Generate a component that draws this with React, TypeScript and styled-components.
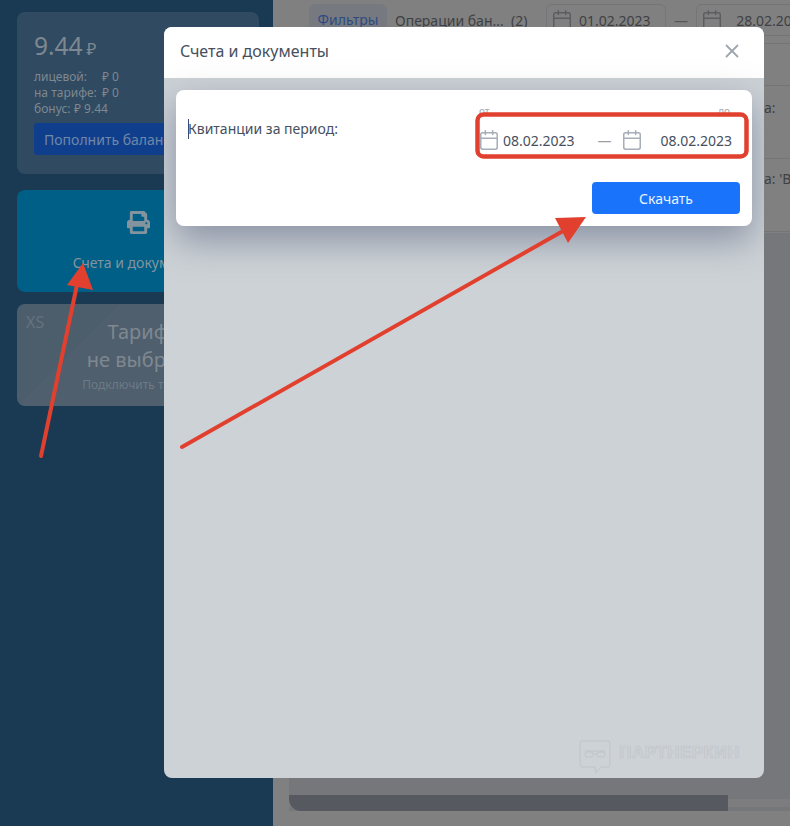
import React from "react";
import styled, { createGlobalStyle } from "styled-components";
import { Calendar, X } from "lucide-react";
import { FaPrint } from "react-icons/fa";

const GlobalStyle = createGlobalStyle`
  html, body {
    margin: 0;
    padding: 0;
    background: #808080;
    font-family: "Noto Sans", "Open Sans", sans-serif;
  }
`;

const Page = styled.div`
  position: relative;
  display: flex;
  width: 790px;
  height: 826px;
  overflow: hidden;
  background: #808080;
`;

const Sidebar = styled.aside`
  flex: 0 0 273px;
  min-width: 0;
  box-sizing: border-box;
  padding: 12px 14px 0 17px;
  display: flex;
  flex-direction: column;
  background: #1a3a54;
`;

const BalanceCard = styled.section`
  box-sizing: border-box;
  height: 162px;
  margin-bottom: 16px;
  padding: 16px 17px;
  border-radius: 8px;
  background: #2f4a61;
  color: #7e8890;
`;

const Amount = styled.div`
  font-size: 24.5px;
  line-height: 36px;
  margin-bottom: 2px;

  small {
    font-size: 17px;
    margin-left: 4px;
  }
`;

const BalanceLine = styled.div`
  display: flex;
  font-size: 12px;
  line-height: 16px;

  span:first-child {
    width: ${(p: { $label: number }) => p.$label}px;
  }
`;

const TopUp = styled.button`
  display: block;
  width: 208px;
  height: 32px;
  margin-top: 6px;
  padding: 0 10px;
  border: none;
  border-radius: 3px;
  background: #0f3f8c;
  color: #6f87a8;
  font: inherit;
  font-size: 14px;
  text-align: left;
  white-space: nowrap;
`;

const DocsCard = styled.section`
  box-sizing: border-box;
  height: 102px;
  margin-bottom: 12px;
  padding-top: 21px;
  display: flex;
  flex-direction: column;
  align-items: center;
  border-radius: 8px;
  background: #005f86;
  color: #84949f;
  font-size: 14px;

  svg {
    font-size: 23px;
    margin-bottom: 19px;
  }
`;

const TariffCard = styled.section`
  position: relative;
  box-sizing: border-box;
  height: 102px;
  padding-top: 14px;
  border-radius: 8px;
  background: linear-gradient(135deg, #4c5d6b 0 30%, #4f5f6d 30% 100%);
  color: #7f8890;
  text-align: center;
`;

const TariffTag = styled.span`
  position: absolute;
  top: 7px;
  left: 9px;
  font-size: 16px;
  color: #66737e;
`;

const TariffTitle = styled.div`
  font-size: 20px;
  line-height: 28px;
`;

const TariffLink = styled.div`
  margin-top: 3px;
  font-size: 12px;
  line-height: 16px;
  color: #6d7a85;
`;

const Main = styled.main`
  flex: 1;
  min-width: 0;
  display: flex;
  flex-direction: column;
  padding-left: 16px;
  color: #3f4043;
  font-size: 14px;
`;

const Toolbar = styled.div`
  display: flex;
  align-items: center;
  flex: 0 0 43px;
  box-sizing: border-box;
  padding: 4px 0 7px 20px;
  white-space: nowrap;
`;

const FilterChip = styled.div`
  box-sizing: border-box;
  flex: 0 0 78px;
  height: 32px;
  margin-right: 8px;
  padding-top: 6px;
  text-align: center;
  border-radius: 6px;
  background: #767a80;
  color: #2f4a80;
`;

const ToolbarLabel = styled.span`
  flex: 0 0 151px;
`;

const ToolbarDate = styled.div`
  box-sizing: border-box;
  flex: 0 0 120px;
  height: 32px;
  padding: 0 4px;
  display: flex;
  align-items: center;
  gap: 6px;
  border: 1px solid #747577;
  border-radius: 6px;

  svg {
    flex: none;
    color: #5c5d60;
  }
`;

const ToolbarDash = styled.span`
  flex: 0 0 30px;
  text-align: center;
  color: #55565a;
`;

const Table = styled.div`
  flex: 0 0 189px;
  border-top: 1px solid #757575;
`;

const TableRow = styled.div`
  box-sizing: border-box;
  height: ${(p: { $height: number; $top: number }) => p.$height}px;
  padding: ${(p: { $height: number; $top: number }) => p.$top}px 0 0 475px;
  border-bottom: 1px solid #757575;
  white-space: nowrap;
`;

const TableRest = styled.div`
  flex: 1;
  background: #76777a;
`;

const ScrollTrack = styled.div`
  flex: 0 0 16px;
  display: flex;
  background: linear-gradient(#76777a 0 4px, #7d7d7f 4px 12px, #76777a 12px);
`;

const ScrollThumb = styled.div`
  width: 439px;
  border-radius: 0 0 0 12px;
  background: #56595f;
`;

const ScrollEnd = styled.div`
  flex: 0 0 15px;
`;

const Modal = styled.div`
  position: absolute;
  top: 27px;
  left: 164px;
  width: 600px;
  height: 751px;
  display: flex;
  flex-direction: column;
  overflow: hidden;
  border-radius: 8px;
  background: #cdd2d6;
  color: #46505e;
`;

const ModalHeader = styled.header`
  flex: 0 0 51px;
  box-sizing: border-box;
  display: flex;
  align-items: center;
  justify-content: space-between;
  padding: 0 21px 4px 16px;
  background: #fff;
  font-size: 16px;

  svg {
    color: #9ea6af;
  }
`;

const ModalBody = styled.div`
  flex: 1;
  padding: 12px;
`;

const ReceiptCard = styled.div`
  box-sizing: border-box;
  height: 136px;
  padding: 0 12px;
  border-radius: 8px;
  background: #fff;
  box-shadow: 0 14px 36px rgba(82, 92, 122, 0.55);
`;

const ReceiptRow = styled.div`
  display: flex;
  justify-content: space-between;
  height: 92px;
`;

const PeriodLabel = styled.label`
  align-self: flex-start;
  margin-top: 29px;
  border-left: 1.5px solid #3a4a7a;
  text-indent: -1px;
  font-size: 14px;
  line-height: 20px;
`;

const PeriodGroup = styled.div`
  box-sizing: border-box;
  width: 263px;
  padding: 15px 8px 0 1px;
`;

const PeriodCaptions = styled.div`
  display: flex;
  justify-content: space-between;
  padding: 0 2px 0 1px;
  font-size: 10px;
  line-height: 12px;
  color: #a3a9b0;
`;

const PeriodDates = styled.div`
  display: flex;
  align-items: center;
  margin-top: 12px;
  font-size: 14px;
`;

const DateField = styled.div`
  flex: ${(p: { $wide?: boolean }) => (p.$wide ? "1" : "0 0 auto")};
  display: flex;
  align-items: center;
  justify-content: space-between;
  gap: 3px;

  svg {
    color: #a8aeb8;
  }
`;

const DateDash = styled.span`
  box-sizing: border-box;
  width: 46px;
  padding-left: 14px;
  text-align: center;
  color: #9aa0a8;
`;

const ReceiptFooter = styled.div`
  display: flex;
  justify-content: flex-end;
`;

const Download = styled.button`
  width: 148px;
  height: 32px;
  border: none;
  border-radius: 4px;
  background: #1a73fb;
  color: #e8f1ff;
  font: inherit;
  font-size: 14px;
`;

const Watermark = styled.div`
  position: absolute;
  right: 24px;
  bottom: 4px;
  display: flex;
  align-items: center;
  gap: 8px;

  svg {
    display: block;
  }
`;

const WatermarkText = styled.span`
  margin-bottom: 8px;
  color: transparent;
  -webkit-text-stroke: 0.7px #bfc4c9;
  font-family: "Liberation Sans", sans-serif;
  font-size: 17px;
  font-weight: 700;
  letter-spacing: 0.5px;
`;

const Annotations = styled.svg`
  position: absolute;
  top: 0;
  left: 0;
`;

const App = () => {
  return (
    <Page>
      <GlobalStyle />
      <Sidebar>
        <BalanceCard>
          <Amount>
            9.44<small>₽</small>
          </Amount>
          <BalanceLine $label={68}>
            <span>лицевой:</span>
            <span>₽ 0</span>
          </BalanceLine>
          <BalanceLine $label={68}>
            <span>на тарифе:</span>
            <span>₽ 0</span>
          </BalanceLine>
          <BalanceLine $label={40}>
            <span>бонус:</span>
            <span>₽ 9.44</span>
          </BalanceLine>
          <TopUp>Пополнить баланс</TopUp>
        </BalanceCard>
        <DocsCard>
          <FaPrint />
          Счета и документы
        </DocsCard>
        <TariffCard>
          <TariffTag>XS</TariffTag>
          <TariffTitle>Тариф</TariffTitle>
          <TariffTitle>не выбран</TariffTitle>
          <TariffLink>Подключить тариф</TariffLink>
        </TariffCard>
      </Sidebar>

      <Main>
        <Toolbar>
          <FilterChip>Фильтры</FilterChip>
          <ToolbarLabel>Операции бан...&nbsp; (2)</ToolbarLabel>
          <ToolbarDate>
            <Calendar size={22} strokeWidth={1.6} />
            01.02.2023
          </ToolbarDate>
          <ToolbarDash>—</ToolbarDash>
          <ToolbarDate>
            <Calendar size={22} strokeWidth={1.6} />
            &nbsp;&nbsp;28.02.2023
          </ToolbarDate>
        </Toolbar>
        <Table>
          <TableRow $height={42} $top={0} />
          <TableRow $height={73} $top={12}>
            а:
          </TableRow>
          <TableRow $height={73} $top={10}>
            а: 'В
          </TableRow>
        </Table>
        <TableRest />
        <ScrollTrack>
          <ScrollThumb />
        </ScrollTrack>
        <ScrollEnd />
      </Main>

      <Modal>
        <ModalHeader>
          Счета и документы
          <X size={22} strokeWidth={2} />
        </ModalHeader>
        <ModalBody>
          <ReceiptCard>
            <ReceiptRow>
              <PeriodLabel>Квитанции за период:</PeriodLabel>
              <PeriodGroup>
                <PeriodCaptions>
                  <span>от</span>
                  <span>до</span>
                </PeriodCaptions>
                <PeriodDates>
                  <DateField>
                    <Calendar size={22} strokeWidth={1.7} />
                    08.02.2023
                  </DateField>
                  <DateDash>—</DateDash>
                  <DateField $wide>
                    <Calendar size={22} strokeWidth={1.7} />
                    08.02.2023
                  </DateField>
                </PeriodDates>
              </PeriodGroup>
            </ReceiptRow>
            <ReceiptFooter>
              <Download>Скачать</Download>
            </ReceiptFooter>
          </ReceiptCard>
        </ModalBody>
        <Watermark>
          <svg width="32" height="34" viewBox="0 0 32 34" fill="none" stroke="#bfc4c9" strokeWidth="1">
            <path d="M3 1h26a2 2 0 0 1 2 2v22a2 2 0 0 1-2 2h-7l-5 6-1-6H3a2 2 0 0 1-2-2V3a2 2 0 0 1 2-2z" />
            <rect x="6" y="12" width="8" height="5" rx="2" />
            <rect x="18" y="12" width="8" height="5" rx="2" />
            <path d="M14 14h4M6 11h20" />
          </svg>
          <WatermarkText>ПАРТНЕРКИН</WatermarkText>
        </Watermark>
      </Modal>

      <Annotations width="790" height="826" viewBox="0 0 790 826" fill="none">
        <rect x="477.5" y="114.5" width="269" height="42" rx="6" stroke="#e2402f" strokeWidth="4.5" />
        <path d="M41 456L78 280" stroke="#e2402f" strokeWidth="4" strokeLinecap="round" />
        <path d="M83 263L67 285L93 290Z" fill="#e2402f" />
        <path d="M182 447L570 227" stroke="#e2402f" strokeWidth="4" strokeLinecap="round" />
        <path d="M586 217L555 218L568 243Z" fill="#e2402f" />
      </Annotations>
    </Page>
  );
};

export default App;
